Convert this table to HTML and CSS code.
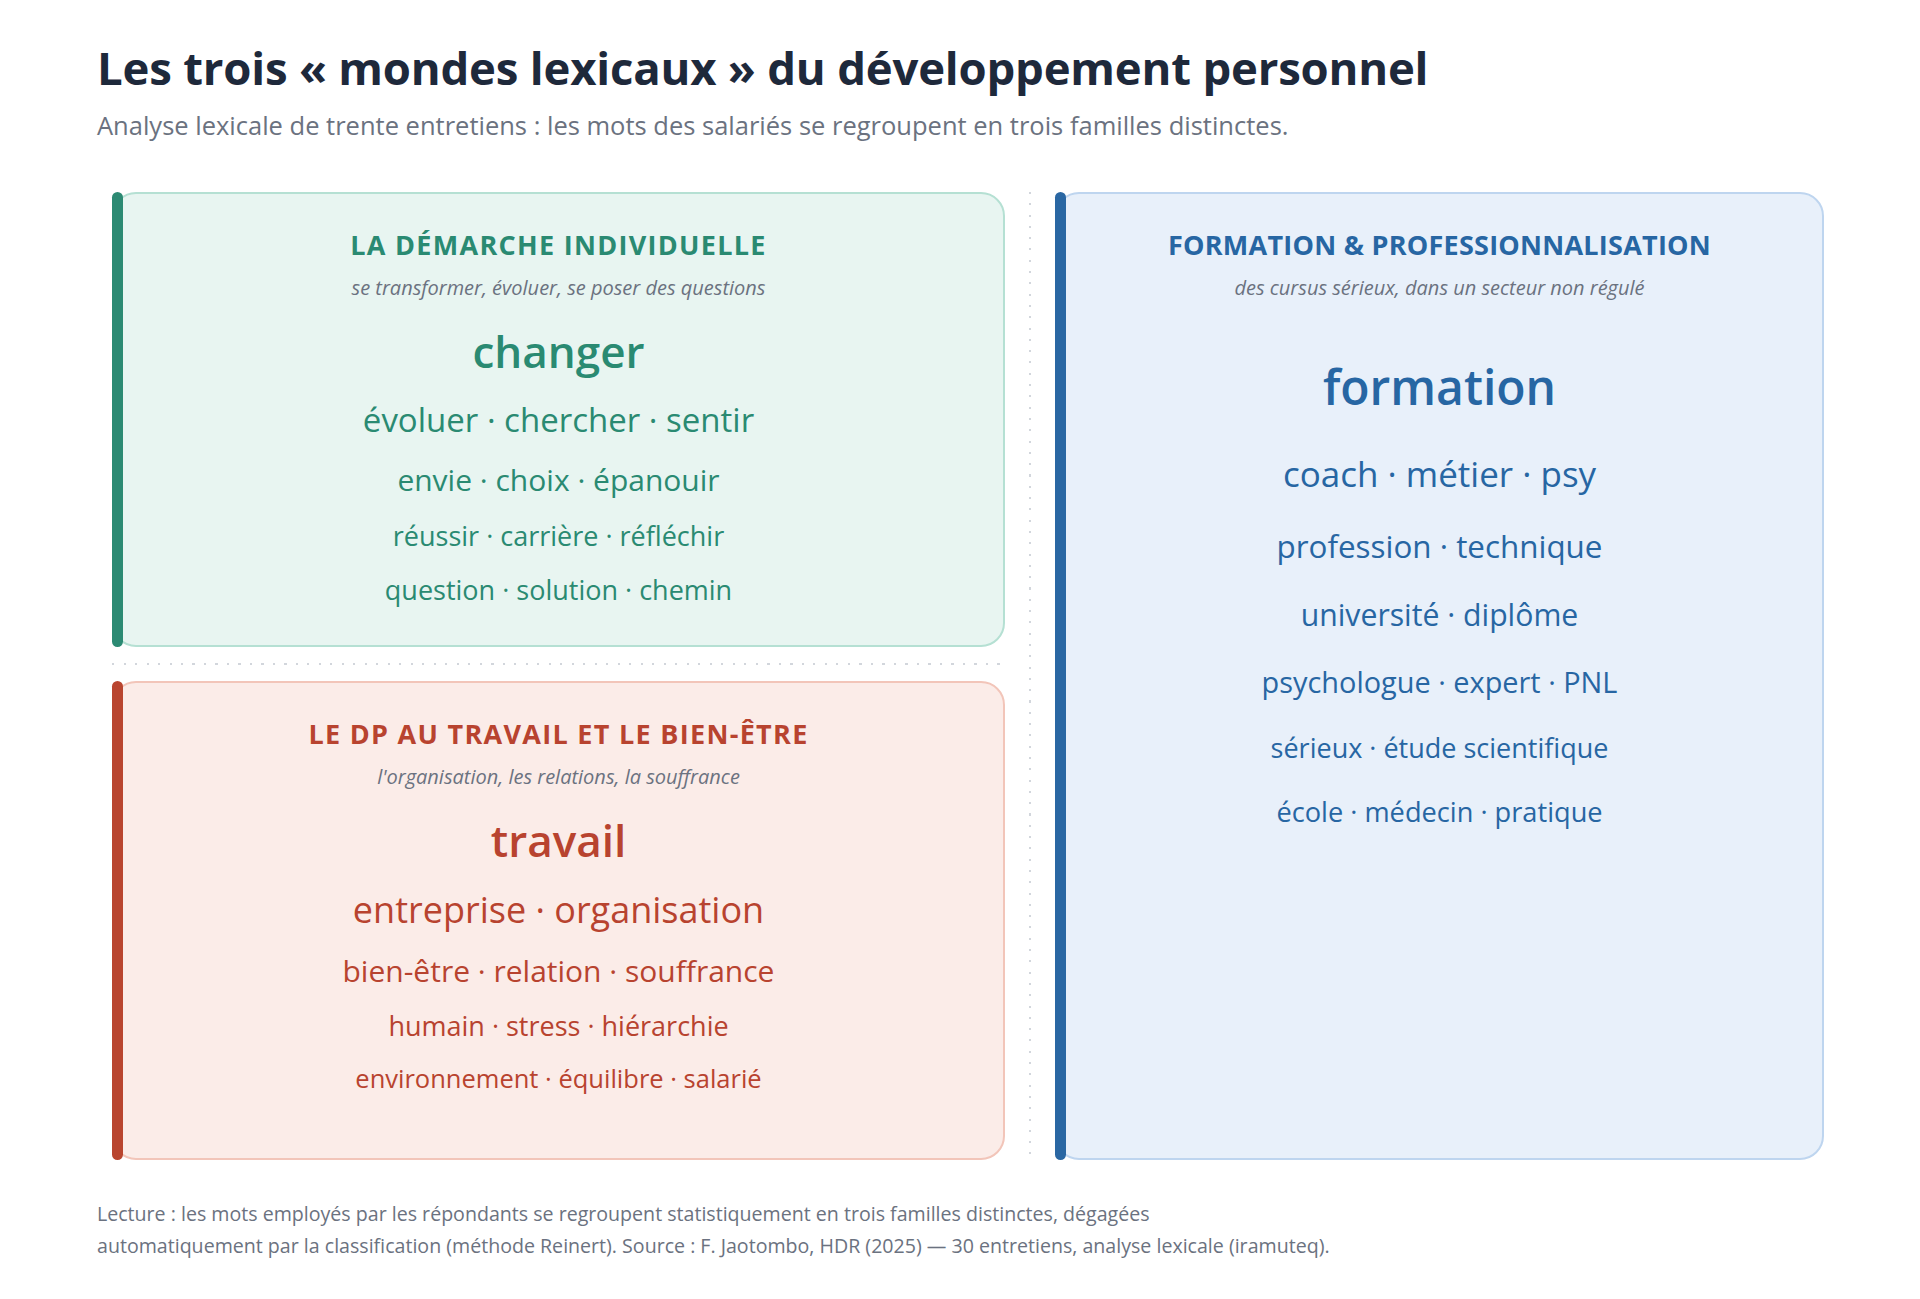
FILE: index.html
```html
<!DOCTYPE html>
<html lang="fr">
<head>
<meta charset="utf-8">
<title>Les trois « mondes lexicaux » du développement personnel</title>
<link rel="stylesheet" href="styles.css">
</head>
<body>
<div class="page">
  <h1 class="title">Les trois « mondes lexicaux » du développement personnel</h1>
  <p class="subtitle">Analyse lexicale de trente entretiens : les mots des salariés se regroupent en trois familles distinctes.</p>

  <div class="board">
    <div class="col-left">
      <section class="card card-green">
        <h2 class="card-title">La démarche individuelle</h2>
        <p class="card-sub">se transformer, évoluer, se poser des questions</p>
        <div class="words">
          <div class="w-main">changer</div>
          <div class="w w-33">évoluer · chercher · sentir</div>
          <div class="w w-30">envie · choix · épanouir</div>
          <div class="w w-27">réussir · carrière · réfléchir</div>
          <div class="w w-27">question · solution · chemin</div>
        </div>
      </section>

      <div class="sep-h"></div>

      <section class="card card-red">
        <h2 class="card-title">Le DP au travail et le bien-être</h2>
        <p class="card-sub">l'organisation, les relations, la souffrance</p>
        <div class="words words-red">
          <div class="w-main">travail</div>
          <div class="w w-36">entreprise · organisation</div>
          <div class="w w-30">bien-être · relation · souffrance</div>
          <div class="w w-27">humain · stress · hiérarchie</div>
          <div class="w w-255">environnement · équilibre · salarié</div>
        </div>
      </section>
    </div>

    <div class="sep-v"></div>

    <section class="card card-blue">
      <h2 class="card-title">Formation &amp; professionnalisation</h2>
      <p class="card-sub">des cursus sérieux, dans un secteur non régulé</p>
      <div class="words words-wide">
        <div class="w-main w-main-lg">formation</div>
        <div class="w w-35 first">coach · métier · psy</div>
        <div class="w w-314">profession · technique</div>
        <div class="w w-302">université · diplôme</div>
        <div class="w w-289">psychologue · expert · PNL</div>
        <div class="w w-27">sérieux · étude scientifique</div>
        <div class="w w-272">école · médecin · pratique</div>
      </div>
    </section>
  </div>

  <p class="note">Lecture : les mots employés par les répondants se regroupent statistiquement en trois familles distinctes, dégagées<br>automatiquement par la classification (méthode Reinert). Source : F. Jaotombo, HDR (2025) — 30 entretiens, analyse lexicale (iramuteq).</p>
</div>
</body>
</html>
```

FILE: styles.css
```css
* { box-sizing: border-box; }

html, body {
  margin: 0;
  padding: 0;
  background: #ffffff;
}

body {
  font-family: "Open Sans", "Noto Sans", "DejaVu Sans", sans-serif;
  color: #1e293b;
}

.page {
  padding: 40px 96px 40px 97px;
}

.title {
  margin: 0;
  font-size: 45.5px;
  line-height: 54px;
  font-weight: 700;
  color: #1e293b;
  letter-spacing: -0.2px;
}

.subtitle {
  margin: 14px 0 0;
  font-size: 25.5px;
  line-height: 34px;
  color: #6b7280;
}

.board {
  margin: 50px 0 0 15px;
  display: grid;
  grid-template-columns: 893px 2px 1fr;
  column-gap: 24px;
  align-items: stretch;
}

.col-left {
  display: flex;
  flex-direction: column;
}

.sep-h {
  height: 2px;
  margin: 16px 0;
  background-image: repeating-linear-gradient(to right, #d2d6dc 0 2px, transparent 2px 11.5px);
}

.sep-v {
  width: 2px;
  background-image: repeating-linear-gradient(to bottom, #d2d6dc 0 2px, transparent 2px 11.3px);
}

.card {
  position: relative;
  border: 2px solid;
  border-radius: 24px;
  text-align: center;
  padding: 34px 24px 39px;
}

.card::before {
  content: "";
  position: absolute;
  left: -2px;
  top: -2px;
  bottom: -2px;
  width: 11px;
  border-radius: 6px;
}

.card-green {
  flex: none;
  background: #e8f5f1;
  border-color: #b5e0d3;
  color: #2a8a72;
}
.card-green::before { background: #2c8a73; }

.card-red {
  flex: 1 1 auto;
  background: #fbece8;
  border-color: #f2c5b9;
  color: #b8432f;
}
.card-red::before { background: #b9452f; }

.card-blue {
  min-height: 968px;
  background: #e8f0fa;
  border-color: #bed5ef;
  color: #2766a3;
}
.card-blue::before { background: #2a67a3; }

.card-title {
  margin: 0;
  font-size: 27px;
  line-height: 34px;
  font-weight: 700;
  letter-spacing: 1.3px;
  text-transform: uppercase;
}

.card-blue .card-title { letter-spacing: 0.25px; }

.card-sub {
  margin: 14px 0 0;
  font-size: 20px;
  line-height: 24px;
  font-style: italic;
  color: #6b7280;
}

.words {
  margin-top: 24px;
  display: flex;
  flex-direction: column;
  align-items: center;
  gap: 22px;
}

.words-red {
  gap: 21px;
}

.words-wide {
  margin-top: 58px;
  gap: 32px;
}

.w-main {
  font-size: 44px;
  line-height: 54px;
  font-weight: 600;
}

.w-main-lg {
  font-size: 48px;
  line-height: 58px;
}

.words-wide .first { margin-top: 5px; }

.w { line-height: 1.2; font-weight: 400; white-space: nowrap; }
.w-36 { font-size: 36px; }
.w-35 { font-size: 35px; }
.w-33 { font-size: 33px; }
.w-314 { font-size: 31.4px; }
.w-302 { font-size: 30.2px; }
.w-30 { font-size: 30px; }
.w-289 { font-size: 28.9px; }
.w-272 { font-size: 27.2px; }
.w-27 { font-size: 27px; }
.w-255 { font-size: 25.5px; }

.note {
  margin: 38px 0 0;
  font-size: 19.6px;
  line-height: 32px;
  color: #6b7280;
}
```
